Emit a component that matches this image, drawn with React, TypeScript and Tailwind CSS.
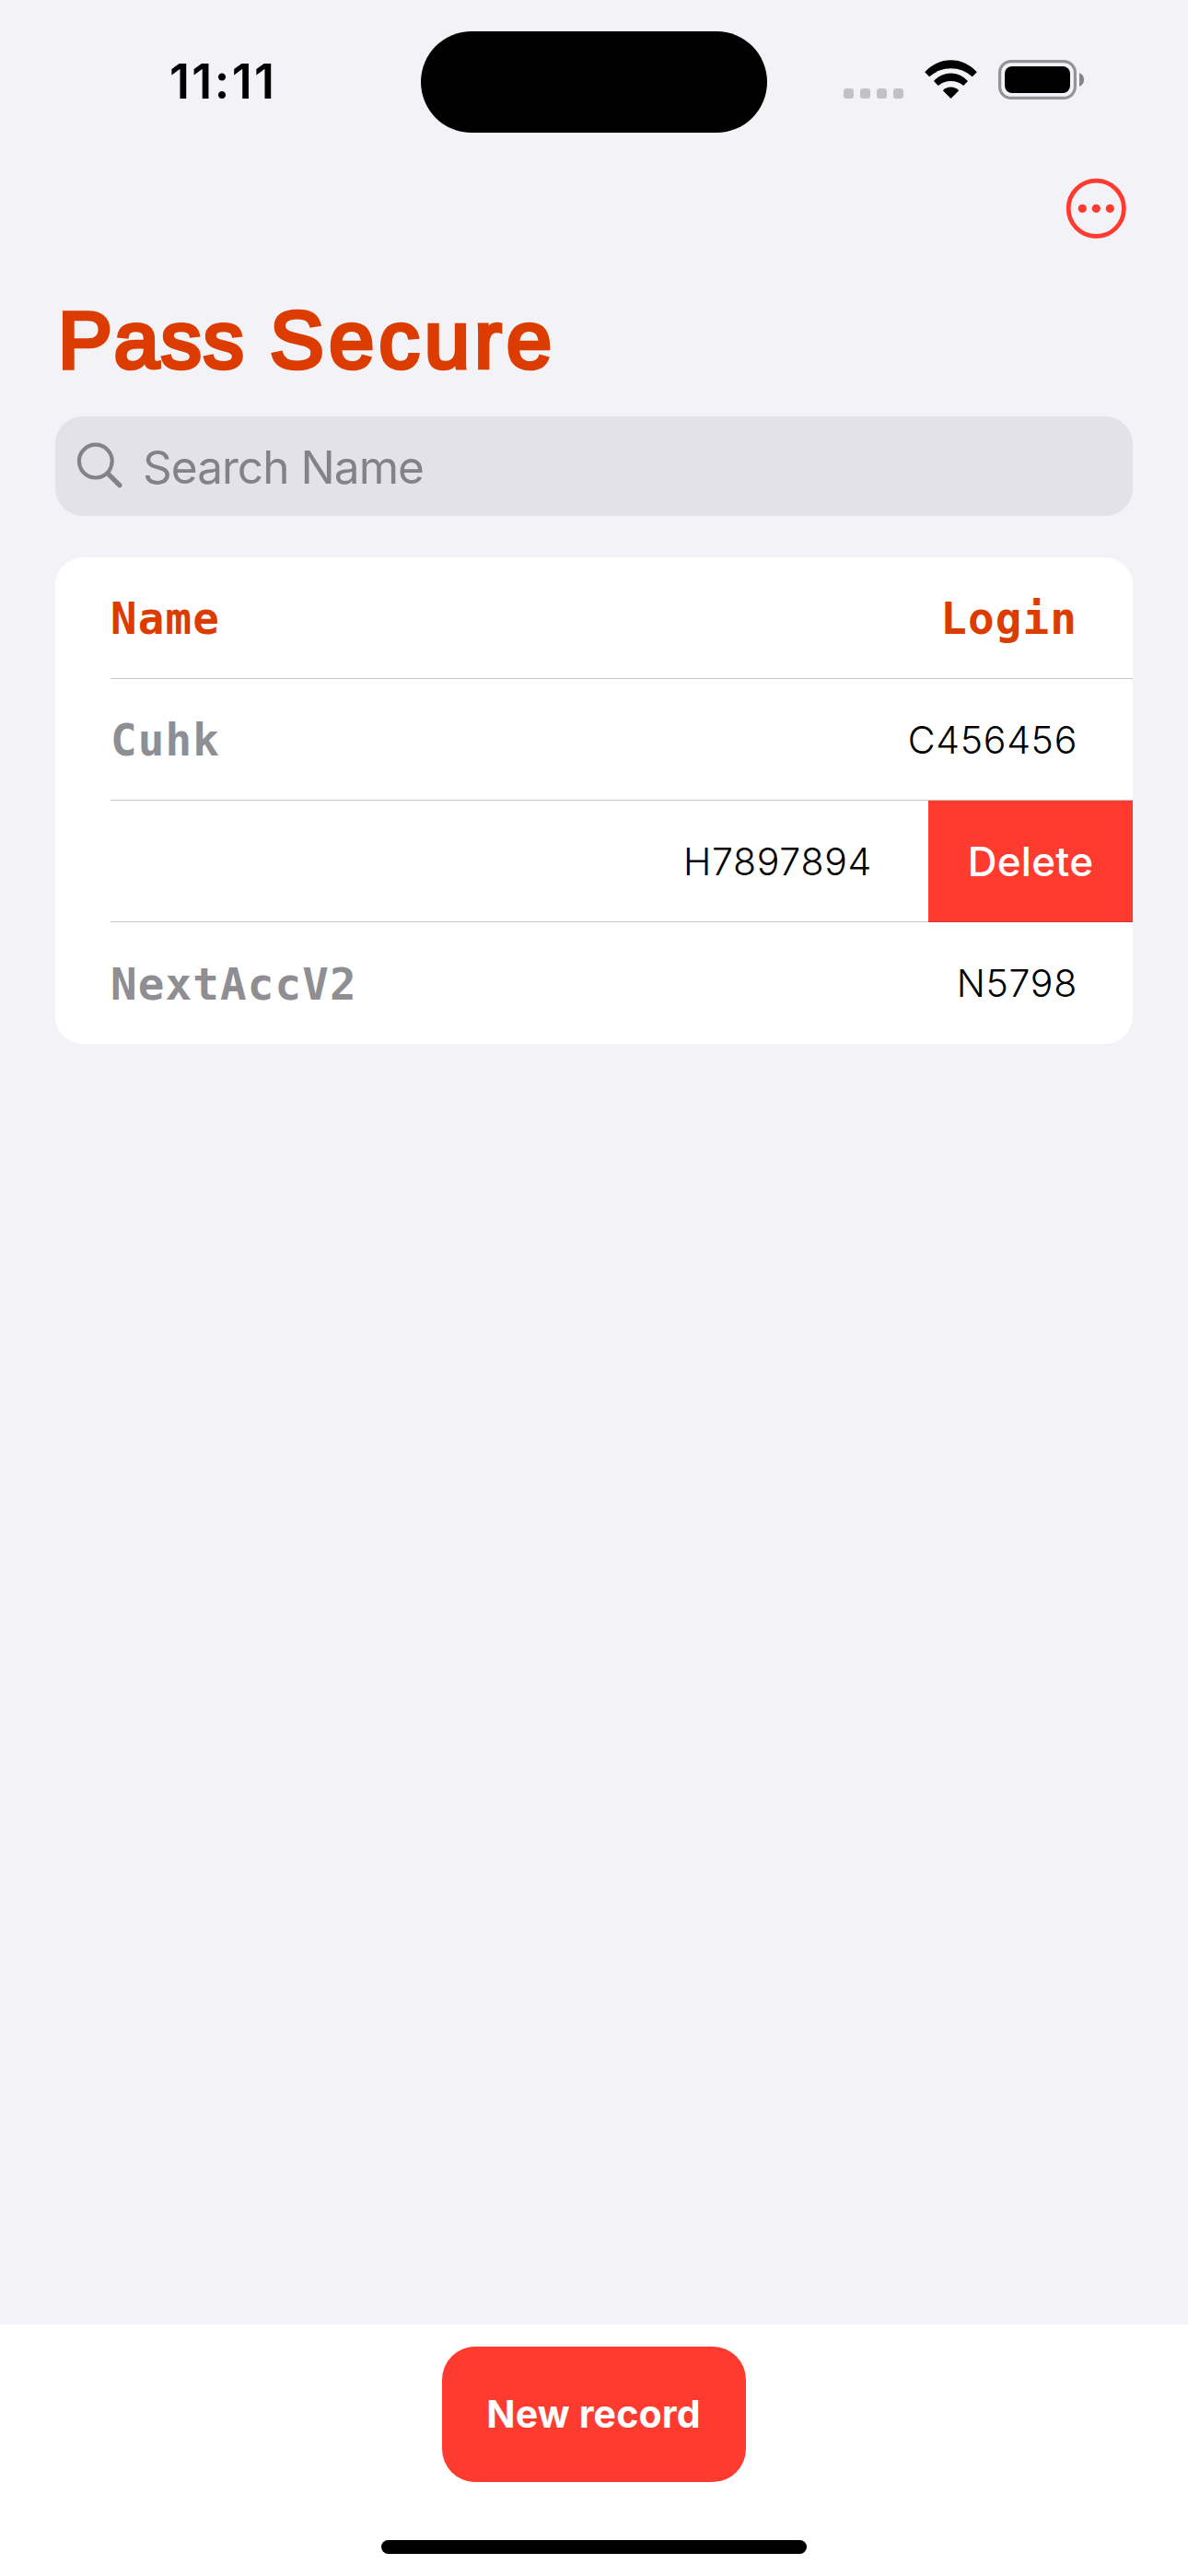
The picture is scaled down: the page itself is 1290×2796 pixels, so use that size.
type RecordItem = { name: string; login: string; swiped?: boolean };

const records: RecordItem[] = [
  { name: "Cuhk", login: "C456456" },
  { name: "", login: "H7897894", swiped: true },
  { name: "NextAccV2", login: "N5798" },
];

const monoText =
  "pt-[3px] font-['DejaVu_Sans_Mono',monospace] text-[47.5px] leading-[60px] font-bold tracking-[1.15px]";

function CellularDots() {
  return (
    <svg className="h-[43px] w-[65px]" viewBox="0 0 65 43" fill="#c2c1c6">
      {[0, 18, 36, 54].map((x) => (
        <rect key={x} x={x} y="31" width="11" height="11" rx="3.2" />
      ))}
    </svg>
  );
}

function WifiIcon() {
  return (
    <svg className="ml-[23px] h-[43px] w-[57px]" viewBox="0 0 57 43" fill="#000">
      <path d="M0.2 13.3A37.2 37.2 0 0 1 56.8 13.3L51.8 18.3A34.3 34.3 0 0 0 5.2 18.3Z" />
      <path d="M10 23A24.4 24.4 0 0 1 47 23L42.2 28A21.5 21.5 0 0 0 14.8 28Z" />
      <path d="M19.8 33.3A12 12 0 0 1 37.2 33.3L28.5 42Z" />
    </svg>
  );
}

function BatteryIcon() {
  return (
    <svg className="ml-[23px] h-[43px] w-[93px]" viewBox="0 0 93 43">
      <rect x="1.6" y="1.6" width="81.8" height="39.8" rx="12.4" fill="none" stroke="#949497" strokeWidth="3.2" />
      <rect x="7" y="7" width="71" height="29" rx="8" fill="#000" />
      <path d="M88 14.2C91 15 93 17.8 93 21.5S91 28 88 28.8Z" fill="#858588" />
    </svg>
  );
}

function StatusBar() {
  return (
    <div className="flex h-[177px] pt-[34px]">
      <div className="w-[457px] pt-[25px] pl-[184px] text-[52px] leading-[60px] font-semibold tracking-[2.36px] text-black">
        11:11
      </div>
      <div className="h-[110px] w-[376px] rounded-full bg-black" />
      <div className="mt-[31px] flex h-[43px] flex-1 pl-[83px]">
        <CellularDots />
        <WifiIcon />
        <BatteryIcon />
      </div>
    </div>
  );
}

function MoreButton() {
  return (
    <button className="block" aria-label="More">
      <svg className="h-[66px] w-[66px]" viewBox="0 0 66 66">
        <circle cx="33.3" cy="33.3" r="30.1" fill="none" stroke="#ff3b30" strokeWidth="4.8" />
        {[18.3, 33.3, 48.3].map((x) => (
          <circle key={x} cx={x} cy="33.3" r="4.6" fill="#ff3b30" />
        ))}
      </svg>
    </button>
  );
}

function SearchField() {
  return (
    <div className="flex h-[108px] items-center rounded-[30px] bg-[#e3e2e8] pl-[23px]">
      <svg className="h-[52px] w-[52px]" viewBox="0 0 52 52" fill="none" stroke="#838288" strokeLinecap="round">
        <circle cx="20.8" cy="20.6" r="17.9" strokeWidth="4.2" />
        <path d="M34.2 34.2L46.8 46.6" strokeWidth="5.4" />
      </svg>
      <div className="pt-[2px] pl-[20px] text-[49.5px] leading-[60px] tracking-[-0.96px] text-[#838288]">Search Name</div>
    </div>
  );
}

function Row({ item, last }: { item: RecordItem; last: boolean }) {
  return (
    <div className="flex h-[132px]">
      <div
        className={`ml-[60px] flex flex-1 items-center justify-between ${last ? "" : "border-b border-[#c6c6c8]"} ${
          item.swiped ? "pr-[61px]" : "pr-[60px]"
        }`}
      >
        <div className={`${monoText} text-[#8e8e93]`}>{item.name}</div>
        <div className="text-[41px] leading-[60px] font-light tracking-[0.7px] text-black">{item.login}</div>
      </div>
      {item.swiped && (
        <button className="flex w-[222px] items-center justify-center border-b border-[#c93a34] bg-[#ff3b30] text-[44px] font-medium tracking-[0.3px] text-white">
          Delete
        </button>
      )}
    </div>
  );
}

export default function App() {
  return (
    <div className="flex h-[2796px] w-[1290px] flex-col bg-[#f2f2f7] font-[Inter,sans-serif]">
      <StatusBar />
      <div className="flex h-[141px] items-start justify-end pt-[16px] pr-[67px]">
        <MoreButton />
      </div>
      <h1 className="h-[134px] pt-px pl-[63px] font-['Liberation_Sans',sans-serif] text-[88px] leading-[100px] font-normal whitespace-nowrap text-[#dc3c00] [-webkit-text-stroke:4.5px_#dc3c00]">
        <span className="tracking-[2px]">Pass </span>
        <span className="tracking-[5.4px]">Secure</span>
      </h1>
      <main className="flex flex-1 flex-col gap-[45px] px-[60px]">
        <SearchField />
        <section className="overflow-hidden rounded-[30px] bg-white">
          <div className="ml-[60px] flex h-[132px] items-center justify-between border-b border-[#c6c6c8] pr-[60px] text-[#dc3c00]">
            <div className={monoText}>Name</div>
            <div className={monoText}>Login</div>
          </div>
          {records.map((item, i) => (
            <Row key={item.login} item={item} last={i === records.length - 1} />
          ))}
        </section>
      </main>
      <footer className="flex h-[273px] flex-col items-center bg-white pt-[24px]">
        <button className="h-[147px] w-[330px] rounded-[36px] bg-[#ff3b30] pr-px text-[41px] font-bold tracking-[0.2px] text-white">
          New record
        </button>
        <div className="mt-[63px] h-[15px] w-[462px] rounded-full bg-black" />
      </footer>
    </div>
  );
}
